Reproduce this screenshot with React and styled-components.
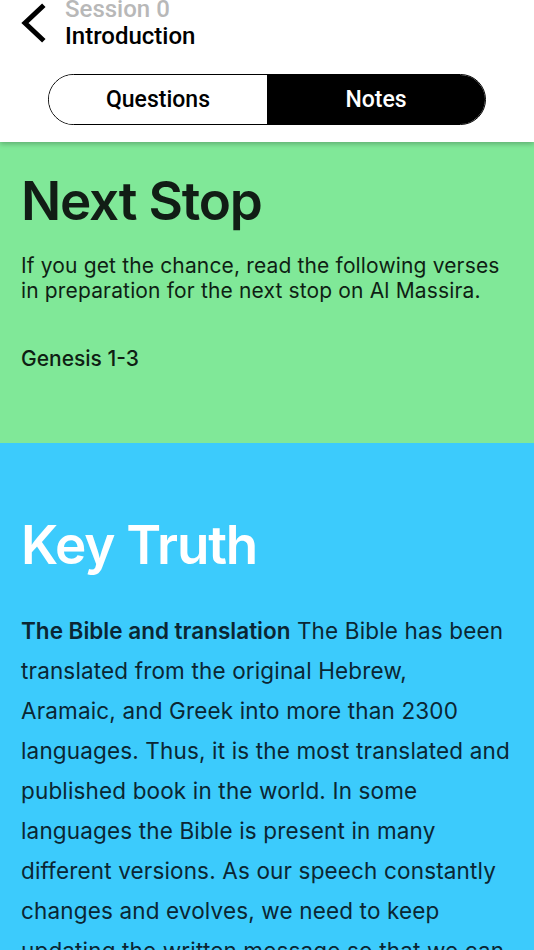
import React, { useState } from "react";
import styled, { createGlobalStyle } from "styled-components";

const GlobalStyle = createGlobalStyle`
  html, body {
    margin: 0;
    padding: 0;
    background: #3ccbfc;
  }
  body {
    font-family: "Inter", "Liberation Sans", sans-serif;
    -webkit-font-smoothing: antialiased;
  }
`;

const Page = styled.div`
  width: 534px;
  height: 950px;
  overflow: hidden;
  display: flex;
  flex-direction: column;
`;

const Header = styled.header`
  background: #ffffff;
  height: 142px;
  box-sizing: border-box;
  display: flex;
  flex-direction: column;
  box-shadow: 0 2px 5px rgba(0, 0, 0, 0.25);
  position: relative;
  z-index: 1;
  flex-shrink: 0;
`;

const TopRow = styled.div`
  display: flex;
  align-items: flex-start;
  gap: 17px;
  padding-left: 20px;
  margin-top: -4px;
`;

const BackButton = styled.button`
  background: none;
  border: none;
  padding: 0;
  margin-top: 7px;
  width: 28px;
  height: 40px;
  cursor: pointer;
  display: flex;
  align-items: center;
  justify-content: center;
`;

const Titles = styled.div`
  display: flex;
  flex-direction: column;
  font-family: "Roboto", "Liberation Sans", sans-serif;
`;

const SessionLabel = styled.span`
  color: #b8b8b8;
  font-size: 24px;
  font-weight: 500;
  line-height: 26px;
`;

const PageTitle = styled.span`
  color: #000;
  font-size: 24px;
  font-weight: 500;
  line-height: 28px;
`;

const Segment = styled.div`
  margin: 24px auto 0;
  width: 438px;
  height: 51px;
  display: flex;
  border: 1.5px solid #000;
  border-radius: 26px;
  overflow: hidden;
  box-sizing: border-box;
`;

const SegmentButton = styled.button`
  flex: 1;
  border: none;
  margin: 0;
  padding: 0;
  font-family: "Roboto", "Liberation Sans", sans-serif;
  font-size: 23px;
  font-weight: 500;
  background: ${(p) => (p.$active ? "#000" : "#fff")};
  color: ${(p) => (p.$active ? "#fff" : "#000")};
  cursor: pointer;
`;

const Section = styled.section`
  background: ${(p) => p.$bg};
  padding: ${(p) => p.$pad};
  flex-shrink: 0;
  box-sizing: border-box;
  height: ${(p) => p.$height || "auto"};
`;

const Heading = styled.h1`
  margin: 0;
  font-size: 53px;
  font-weight: 600;
  line-height: 64px;
  letter-spacing: -1.2px;
  color: ${(p) => p.$color};
`;

const Lead = styled.p`
  margin: 20px 0 0;
  font-size: 21px;
  line-height: 25px;
  letter-spacing: 0.15px;
  color: #0f1f14;
`;

const Reference = styled.p`
  margin: 43px 0 0;
  font-size: 21px;
  font-weight: 500;
  line-height: 25px;
  color: #0f1f14;
`;

const Body = styled.p`
  margin: 34px 0 0;
  font-size: 22.5px;
  line-height: 40px;
  letter-spacing: 0.15px;
  color: #0b2633;

  strong {
    font-weight: 600;
    letter-spacing: 0;
  }
`;

const keyTruthLines = [
  "translated from the original Hebrew,",
  "Aramaic, and Greek into more than 2300",
  "languages. Thus, it is the most translated and",
  "published book in the world. In some",
  "languages the Bible is present in many",
  "different versions. As our speech constantly",
  "changes and evolves, we need to keep",
  "updating the written message so that we can",
  "understand it.",
];

function ChevronLeft() {
  return (
    <svg width="28" height="40" viewBox="0 0 28 40">
      <path
        d="M22 4 L5 20 L22 36"
        fill="none"
        stroke="#000"
        strokeWidth="5"
        strokeLinecap="square"
      />
    </svg>
  );
}

export default function App() {
  const [tab, setTab] = useState("notes");

  return (
    <Page>
      <GlobalStyle />
      <Header>
        <TopRow>
          <BackButton aria-label="Back">
            <ChevronLeft />
          </BackButton>
          <Titles>
            <SessionLabel>Session 0</SessionLabel>
            <PageTitle>Introduction</PageTitle>
          </Titles>
        </TopRow>
        <Segment>
          <SegmentButton $active={tab === "questions"} onClick={() => setTab("questions")}>
            Questions
          </SegmentButton>
          <SegmentButton $active={tab === "notes"} onClick={() => setTab("notes")}>
            Notes
          </SegmentButton>
        </Segment>
      </Header>

      <Section $bg="#80e898" $pad="27px 21px 0" $height="301px">
        <Heading $color="#111d15">Next Stop</Heading>
        <Lead>
          If you get the chance, read the following verses in preparation for
          the next stop on Al Massira.
        </Lead>
        <Reference>Genesis 1-3</Reference>
      </Section>

      <Section $bg="#3ccbfc" $pad="70px 12px 0 21px">
        <Heading $color="#ffffff">Key Truth</Heading>
        <Body>
          <strong>The Bible and translation</strong> The Bible has been
          {keyTruthLines.map((line) => (
            <React.Fragment key={line}>
              <br />
              {line}
            </React.Fragment>
          ))}
        </Body>
      </Section>
    </Page>
  );
}
